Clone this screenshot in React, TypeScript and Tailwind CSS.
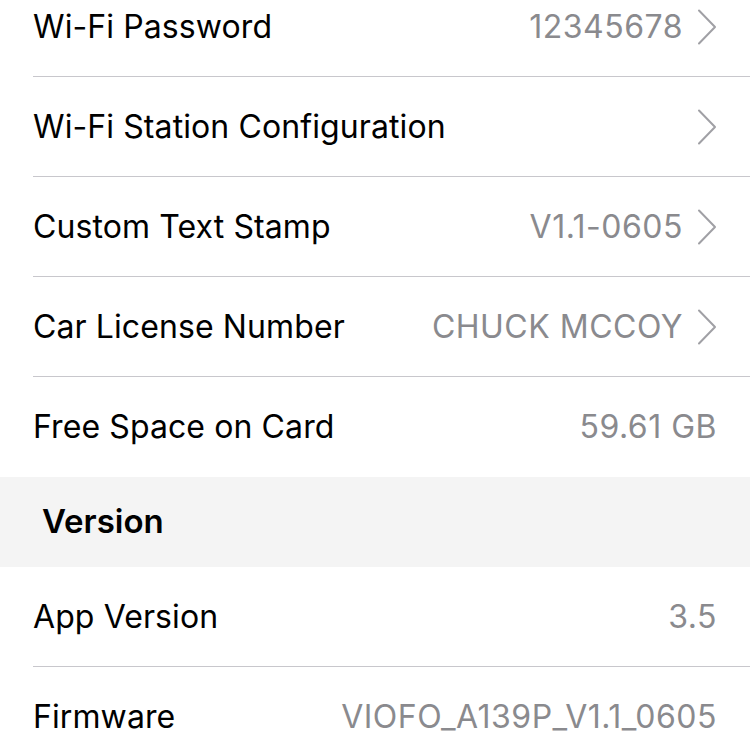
import React from "react";

const font = { fontFamily: "Inter, 'Noto Sans', 'Liberation Sans', sans-serif" };

function Chevron() {
  return (
    <svg width="20" height="36" viewBox="0 0 20 36" className="ml-[14px] shrink-0">
      <path d="M2 1.5 L18 18 L2 34.5" fill="none" stroke="#a0a0a5" strokeWidth="2" strokeLinecap="round" strokeLinejoin="round" />
    </svg>
  );
}

function Row({ label, value, chevron, last }: { label: string; value?: string; chevron?: boolean; last?: boolean }) {
  return (
    <div className="h-[100px] pl-[33px] bg-white">
      <div className={`flex h-full items-center pr-[33px] ${last ? "" : "border-b border-[#c8c7cc]"}`}>
        <span className="flex-1 text-[32px] text-black tracking-[0.1px]">{label}</span>
        {value && <span className="text-[32px] text-[#8a8a8e] tracking-[0.5px]">{value}</span>}
        {chevron && <Chevron />}
      </div>
    </div>
  );
}

export default function App() {
  return (
    <div className="w-[750px] h-[750px] overflow-hidden bg-white" style={font}>
      <div className="-mt-[23px]">
        <Row label="Wi-Fi Password" value="12345678" chevron />
        <Row label="Wi-Fi Station Configuration" chevron />
        <Row label="Custom Text Stamp" value="V1.1-0605" chevron />
        <Row label="Car License Number" value="CHUCK MCCOY" chevron />
        <Row label="Free Space on Card" value="59.61 GB" last />
        <div className="h-[90px] bg-[#f4f4f4] flex items-center pl-[42px]">
          <span className="text-[33px] font-semibold text-black">Version</span>
        </div>
        <Row label="App Version" value="3.5" />
        <Row label="Firmware" value="VIOFO_A139P_V1.1_0605" last />
      </div>
    </div>
  );
}
